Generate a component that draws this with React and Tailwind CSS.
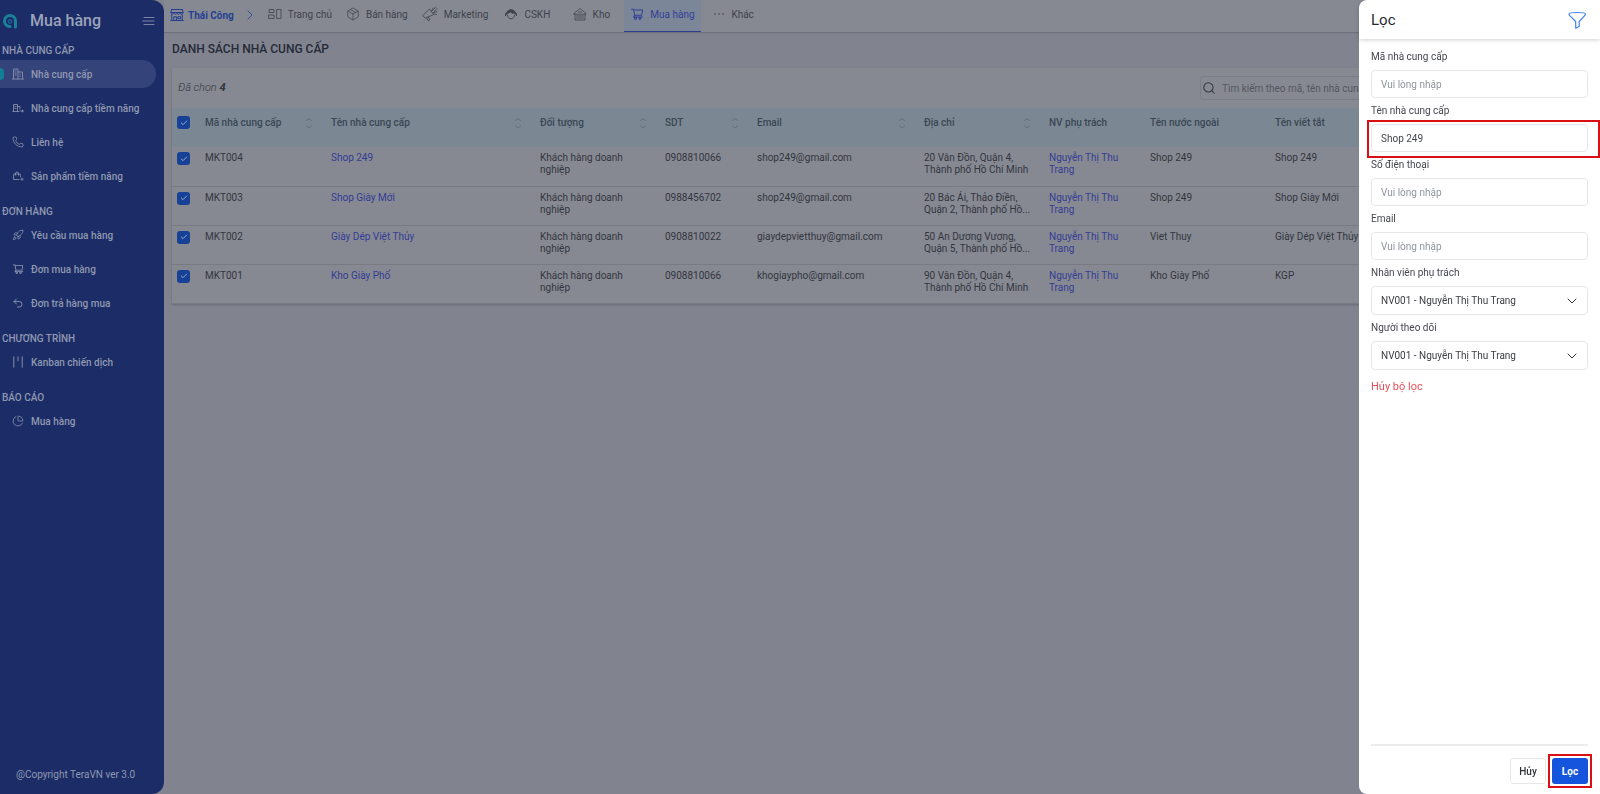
import { Search, ChevronDown, ChevronRight, Rocket, ChartPie, Phone, Undo2, Package, Check } from "lucide-react";
import { AiOutlineShoppingCart } from "react-icons/ai";

const stroke = { fill: "none", stroke: "currentColor", strokeLinecap: "round", strokeLinejoin: "round" };

function Logo() {
  return (
    <svg viewBox="0 0 16 16" className="size-4 text-[#1b8197]" {...stroke} strokeWidth="3" aria-hidden="true">
      <path d="M8 13.5A5.5 5.5 0 1 1 13.5 8v6" />
      <circle cx="8" cy="8.5" r="1.6" strokeWidth="1.6" stroke="#1e5a93" />
    </svg>
  );
}

function BuildingIcon() {
  return (
    <svg viewBox="0 0 12 12" className="size-3" {...stroke} strokeWidth="0.8" aria-hidden="true">
      <path d="M1.500 11V1h4.500v10M6 4h4.500v7M.5 11h11M3 3h1.300M3 5h1.300M3 7h1.300M8 6v.5M8 8v.5" />
    </svg>
  );
}

function LeadIcon() {
  return (
    <svg viewBox="0 0 12 12" className="size-3" {...stroke} strokeWidth="0.8" aria-hidden="true">
      <path d="M1.500 9.500V2.500h4v7M5.500 4.500h2.500v2.500M.8 9.500H7M2.800 4.500h1.200M2.800 6.500h1.200M8 8.500l1 1M10.500 8v2M9.500 9h2" />
    </svg>
  );
}

function BagIcon() {
  return (
    <svg viewBox="0 0 12 12" className="size-3" {...stroke} strokeWidth="0.8" aria-hidden="true">
      <path d="M7 9.500H1.300L1.800 4h6.400l.3 2.800M3.500 5.200V3.500a1.500 1.500 0 0 1 3 0v1.700M10 8v2.400M8.800 9.200h2.400" />
    </svg>
  );
}

function KanbanIcon() {
  return (
    <svg viewBox="0 0 12 12" className="size-3" {...stroke} strokeWidth="0.9" aria-hidden="true">
      <path d="M1.800 .8v10.400M6 .8v4M10.200 .8v10.400" />
    </svg>
  );
}

function StoreIcon() {
  return (
    <svg viewBox="0 0 14 14" className="size-3.5" {...stroke} strokeWidth="1" aria-hidden="true">
      <path d="M1.500 1.500h11M1.500 1.500L1 4.500c0 2.200 3 2.200 3 0 0 2.200 3 2.200 3 0 0 2.200 3 2.200 3 0 0 2.200 3 2.200 3 0l-.5-3M1 4.500h12M1.800 6.500v6M12.200 6.500v6M.8 12.500h12.400M3.800 12.500V8.700h2.600v3.800M8.200 8.700h2.400v2H8.200z" />
    </svg>
  );
}

function DashboardIcon() {
  return (
    <svg viewBox="0 0 14 14" className="size-3.5" {...stroke} strokeWidth="0.8" aria-hidden="true">
      <path d="M1.500 2.500h4.500v3H1.500zM1 8h5v3.500H1zM9 2.500h4v9H9z" />
    </svg>
  );
}

function MarketingIcon() {
  return (
    <svg viewBox="0 0 16 16" className="size-4" {...stroke} strokeWidth="0.8" aria-hidden="true">
      <path d="M1 9.200L7.500 3l4.200 5.600-8 3.400zM4.500 11.800l1.800 3 1.700-.9-1.700-2.800M9.500 5.500l1.500-3.500M11 7l4-4.500M10.800 4.200l3-3.200M12 8l2.500.5M12.500 6.500l2.500-.8" />
    </svg>
  );
}

function SupportIcon() {
  return (
    <svg viewBox="0 0 14 14" className="size-3.5" {...stroke} strokeWidth="0.9" aria-hidden="true">
      <path d="M2.200 7.500a4.800 4.800 0 0 1 9.600 0L10.500 6 8.500 6.300 6.500 5 4 6.300z" fill="currentColor" />
      <path d="M1.500 6.500v2.200M12.500 6.500v2.200M3.200 8c.4 2.400 2 3.800 3.800 3.800s3.400-1.400 3.800-3.800" />
    </svg>
  );
}

function WarehouseIcon() {
  return (
    <svg viewBox="0 0 14 14" className="size-3.5" {...stroke} strokeWidth="0.8" aria-hidden="true">
      <path d="M1 6.500l6-5 6 5v.7H1zM2 7.200V13h10V7.200M3.500 9h7M3.500 11h7M5.500 5h3" />
    </svg>
  );
}

function DotsIcon() {
  return (
    <svg viewBox="0 0 12 12" className="size-3" fill="currentColor" aria-hidden="true">
      <circle cx="2" cy="6" r=".8" />
      <circle cx="6" cy="6" r=".8" />
      <circle cx="10" cy="6" r=".8" />
    </svg>
  );
}

function FunnelIcon() {
  return (
    <svg viewBox="0 0 20 20" className="size-5 text-[#3f83f0]" {...stroke} strokeWidth="1.2" aria-hidden="true">
      <path d="M1 4c0-2 16.400-2 16.400 0 0 .8-.5 1.200-1 1.800L11.200 11.500v4.700l-3.500 2V11.500L2 5.800C1.500 5.200 1 4.800 1 4z" />
    </svg>
  );
}

function SortIcon() {
  return (
    <svg viewBox="0 0 8 12" className="h-3 w-2 text-[#596a78]" {...stroke} strokeWidth="0.8" aria-hidden="true">
      <path d="M1.500 3.500L4 1.500l2.500 2M1.500 9L4 11l2.500-2" />
    </svg>
  );
}

const menu = [
  {
    title: "NHÀ CUNG CẤP",
    items: [
      { label: "Nhà cung cấp", icon: <BuildingIcon />, active: true },
      { label: "Nhà cung cấp tiềm năng", icon: <LeadIcon /> },
      { label: "Liên hệ", icon: <Phone className="size-3" strokeWidth={1.5} /> },
      { label: "Sản phẩm tiềm năng", icon: <BagIcon /> },
    ],
  },
  {
    title: "ĐƠN HÀNG",
    items: [
      { label: "Yêu cầu mua hàng", icon: <Rocket className="size-3" strokeWidth={1.5} /> },
      { label: "Đơn mua hàng", icon: <AiOutlineShoppingCart className="size-3" /> },
      { label: "Đơn trả hàng mua", icon: <Undo2 className="size-3" strokeWidth={1.75} /> },
    ],
  },
  { title: "CHƯƠNG TRÌNH", items: [{ label: "Kanban chiến dịch", icon: <KanbanIcon /> }] },
  { title: "BÁO CÁO", items: [{ label: "Mua hàng", icon: <ChartPie className="size-3" strokeWidth={1.5} /> }] },
];

const tabs = [
  { label: "Trang chủ", icon: <DashboardIcon /> },
  { label: "Bán hàng", icon: <Package className="size-3.5" strokeWidth={1.25} /> },
  { label: "Marketing", icon: <MarketingIcon /> },
  { label: "CSKH", icon: <SupportIcon /> },
  { label: "Kho", icon: <WarehouseIcon /> },
  { label: "Mua hàng", icon: <AiOutlineShoppingCart className="size-3.5" />, active: true },
  { label: "Khác", icon: <DotsIcon /> },
];

const columns = [
  { label: "Mã nhà cung cấp", sort: true },
  { label: "Tên nhà cung cấp", sort: true },
  { label: "Đối tượng", sort: true },
  { label: "SDT", sort: true },
  { label: "Email", sort: true },
  { label: "Địa chỉ", sort: true },
  { label: "NV phụ trách" },
  { label: "Tên nước ngoài" },
  { label: "Tên viết tắt" },
];

const rows = [
  ["MKT004", "Shop 249", "0908810066", "shop249@gmail.com", ["20 Vân Đồn, Quận 4,", "Thành phố Hồ Chí Minh"], "Shop 249", "Shop 249"],
  ["MKT003", "Shop Giày Mới", "0988456702", "shop249@gmail.com", ["20 Bác Ái, Thảo Điền,", "Quận 2, Thành phố Hồ..."], "Shop 249", "Shop Giày Mới"],
  ["MKT002", "Giày Dép Việt Thủy", "0908810022", "giaydepvietthuy@gmail.com", ["50 An Dương Vương,", "Quận 5, Thành phố Hồ..."], "Viet Thuy", "Giày Dép Việt Thủy"],
  ["MKT001", "Kho Giày Phố", "0908810066", "khogiaypho@gmail.com", ["90 Vân Đồn, Quận 4,", "Thành phố Hồ Chí Minh"], "Kho Giày Phố", "KGP"],
];

function CheckBox({ label }) {
  return (
    <label className="relative block size-[13px]">
      <input
        type="checkbox"
        defaultChecked
        aria-label={label}
        className="block size-full appearance-none rounded-[3px] bg-[#77797f] checked:bg-[#164196]"
      />
      <Check className="pointer-events-none absolute inset-0 m-auto size-2 text-[#9aa9c8]" strokeWidth={3} />
    </label>
  );
}

function Sidebar() {
  return (
    <aside className="flex w-[164px] shrink-0 flex-col rounded-r-xl bg-[#1b2c66] text-[10px] font-medium text-[#8f98b0]">
      <div className="flex h-[41px] items-center pr-2 pl-0.5">
        <Logo />
        <span className="ml-3 flex-1 text-base text-[#9ba3bb]">Mua hàng</span>
        <button type="button" aria-label="Thu gọn menu" className="text-[#7883a6]">
          <svg viewBox="0 0 14 14" className="size-3.5" {...stroke} strokeWidth="1" aria-hidden="true">
            <path d="M2 3.500h10M.5 7h11.500M2 10.500h10" />
          </svg>
        </button>
      </div>
      <nav className="flex flex-1 flex-col gap-3">
        {menu.map((section) => (
          <section key={section.title}>
            <h2 className="h-[19px] pl-0.5 leading-[19px]">{section.title}</h2>
            <ul className="flex flex-col gap-1.5">
              {section.items.map((item) => (
                <li key={item.label} className="pr-2">
                  <a
                    href="#"
                    className={
                      item.active
                        ? "relative flex h-7 items-center gap-[7px] overflow-hidden rounded-r-full bg-[#34437a] pl-3"
                        : "flex h-7 items-center gap-[7px] pl-3"
                    }
                  >
                    {item.active && <span className="absolute inset-y-2 left-0 w-1 rounded-r-full bg-[#137f96]" />}
                    {item.icon}
                    <span>{item.label}</span>
                  </a>
                </li>
              ))}
            </ul>
          </section>
        ))}
      </nav>
      <p className="pb-3 pl-4 font-normal">@Copyright TeraVN ver 3.0</p>
    </aside>
  );
}

function TopBar() {
  return (
    <header className="flex h-8 items-start bg-[#868992] text-[10px] text-[#3f424a] shadow-[0_1px_1px_rgba(60,62,72,0.25)]">
      <a href="#" className="flex h-[30px] items-center gap-1 pl-1.5 font-bold text-[#243f92]">
        <StoreIcon />
        Thái Công
      </a>
      <ChevronRight className="mt-[7px] ml-2 size-4 text-[#3450a0]" strokeWidth={1.5} />
      <nav className="ml-1 flex h-full gap-0.5">
        {tabs.map((tab) => (
          <a
            key={tab.label}
            href="#"
            className={
              tab.active
                ? "flex h-8 items-center gap-1.5 border-b border-[#2d3c8c] bg-[#7b8798] px-1.5 pb-[3px] text-[#333f96]"
                : "flex h-7 min-w-[62px] items-center justify-center gap-1.5 px-1.5"
            }
          >
            {tab.icon}
            {tab.label}
          </a>
        ))}
      </nav>
    </header>
  );
}

function SupplierTable() {
  return (
    <table className="w-full table-fixed border-collapse text-left text-[10px] leading-3 text-[#33363e]">
      <colgroup>
        <col className="w-[25px]" />
        <col className="w-[126px]" />
        <col className="w-[209px]" />
        <col className="w-[125px]" />
        <col className="w-[92px]" />
        <col className="w-[167px]" />
        <col className="w-[125px]" />
        <col className="w-[101px]" />
        <col className="w-[125px]" />
        <col />
      </colgroup>
      <thead>
        <tr className="h-[39px] bg-[#7b8893] align-top text-[#3a4653]">
          <th className="pt-2 pl-[5px]">
            <CheckBox label="Chọn tất cả" />
          </th>
          {columns.map((c) => (
            <th key={c.label} className="pt-[9px] pr-2.5 pl-2 font-medium">
              <span className="flex items-start justify-between">
                {c.label}
                {c.sort && <SortIcon />}
              </span>
            </th>
          ))}
        </tr>
      </thead>
      <tbody>
        {rows.map(([code, name, phone, email, address, foreign, short]) => (
          <tr key={code} className="h-[39px] border-b border-[#787b84] bg-[#868992] align-top">
            <td className="pt-[5px] pl-[5px]">
              <CheckBox label={code} />
            </td>
            <td className="px-2 pt-[5px]">{code}</td>
            <td className="px-2 pt-[5px]">
              <a href="#" className="text-[#343c94]">{name}</a>
            </td>
            <td className="px-2 pt-[5px]">Khách hàng doanh nghiệp</td>
            <td className="px-2 pt-[5px]">{phone}</td>
            <td className="px-2 pt-[5px]">{email}</td>
            <td className="pt-[5px] pl-2 whitespace-nowrap">
              {address[0]}
              <br />
              {address[1]}
            </td>
            <td className="px-2 pt-[5px]">
              <a href="#" className="text-[#343c94]">Nguyễn Thị Thu Trang</a>
            </td>
            <td className="px-2 pt-[5px]">{foreign}</td>
            <td className="px-2 pt-[5px]">{short}</td>
          </tr>
        ))}
      </tbody>
    </table>
  );
}

function Field({ id, label, value, highlight }) {
  return (
    <div className="relative flex flex-col gap-1.5">
      <label htmlFor={id} className="leading-[14px]">{label}</label>
      <input
        id={id}
        type="text"
        defaultValue={value}
        placeholder="Vui lòng nhập"
        className="h-7 w-full rounded-sm border border-[#e6e7ea] px-[9px] text-[#44474d] outline-none placeholder:text-[#8f949c]"
      />
      {highlight && <span className="pointer-events-none absolute -inset-x-1 top-4 -right-3 h-[38px] border-2 border-[#d90f14]" />}
    </div>
  );
}

function SelectField({ id, label }) {
  return (
    <div className="flex flex-col gap-1.5">
      <label htmlFor={id} className="leading-[14px]">{label}</label>
      <div className="relative">
        <select
          id={id}
          className="h-[29px] w-full appearance-none rounded-sm border border-[#e6e7ea] bg-white px-[9px] text-[#3a3d43] outline-none"
        >
          <option>NV001 - Nguyễn Thị Thu Trang</option>
        </select>
        <ChevronDown className="pointer-events-none absolute top-[7px] right-2 size-4 text-[#303338]" strokeWidth={1.5} />
      </div>
    </div>
  );
}

function FilterDrawer() {
  return (
    <div role="dialog" aria-label="Lọc" className="fixed inset-y-0 right-0 flex w-[241px] flex-col rounded-l-lg bg-white text-[10px] text-[#44474d]">
      <div className="flex h-[39px] shrink-0 items-center justify-between rounded-tl-lg px-3 pt-px shadow-[0_1px_4px_rgba(0,0,0,0.18)]">
        <h2 className="text-[15px] text-[#26282d]">Lọc</h2>
        <button type="button" aria-label="Bộ lọc">
          <FunnelIcon />
        </button>
      </div>
      <form className="flex flex-1 flex-col items-stretch gap-1.5 px-3 pt-[11px]">
        <Field id="code" label="Mã nhà cung cấp" />
        <Field id="name" label="Tên nhà cung cấp" value="Shop 249" highlight />
        <Field id="phone" label="Số điện thoại" />
        <Field id="email" label="Email" />
        <SelectField id="owner" label="Nhân viên phụ trách" />
        <SelectField id="follower" label="Người theo dõi" />
        <button type="button" className="mt-1 self-start text-[11px] leading-[14px] text-[#e2505a]">Hủy bộ lọc</button>
      </form>
      <div className="mx-3 flex justify-end gap-1.5 border-t-2 border-[#ededef] pt-3 pb-2.5 font-medium">
        <button type="button" className="h-[26px] w-9 rounded-[3px] border border-[#e6e7ea] text-[#303338]">Hủy</button>
        <div className="relative">
          <button type="button" className="h-[26px] w-9 rounded-[3px] bg-[#1554dd] font-bold text-white">Lọc</button>
          <span className="pointer-events-none absolute -inset-1 border-2 border-[#d90f14]" />
        </div>
      </div>
    </div>
  );
}

export default function App() {
  return (
    <div className="flex min-h-screen bg-[#81838f] font-['Roboto','Liberation_Sans',sans-serif]">
      <Sidebar />
      <div className="flex min-w-0 flex-1 flex-col">
        <TopBar />
        <main className="pl-2">
          <h1 className="flex h-9 items-center pb-[3px] text-xs font-medium text-[#262a38]">DANH SÁCH NHÀ CUNG CẤP</h1>
          <section className="bg-[#868992] shadow-[0_1px_2px_rgba(0,0,0,0.2)]">
            <div className="flex h-10 items-center justify-between pr-40 pl-1.5">
              <p className="text-[11px] font-light text-[#33363e] italic">
                Đã chọn <b className="font-bold">4</b>
              </p>
              <label className="flex h-6 w-[240px] items-center gap-1.5 rounded-sm border border-[#7b7e87] pl-px">
                <Search className="size-3.5 text-[#32353c]" strokeWidth={1.75} />
                <input
                  type="search"
                  aria-label="Tìm kiếm"
                  placeholder="Tìm kiếm theo mã, tên nhà cung cấp"
                  className="min-w-0 flex-1 text-[10px] outline-none placeholder:text-[#54575f]"
                />
              </label>
            </div>
            <SupplierTable />
          </section>
        </main>
      </div>
      <FilterDrawer />
    </div>
  );
}
